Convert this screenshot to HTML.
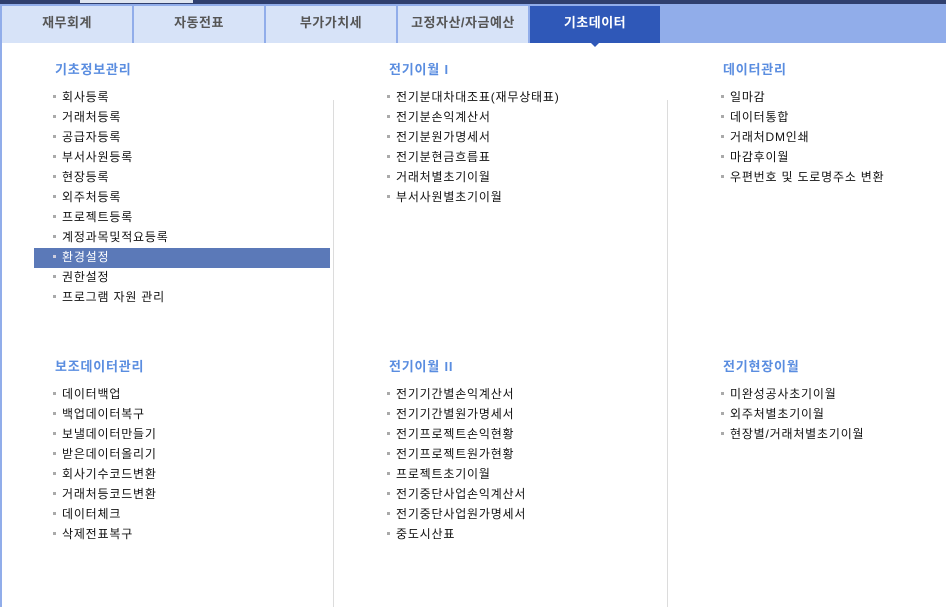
<!DOCTYPE html><html><head><meta charset="utf-8"><style>
*{margin:0;padding:0;box-sizing:border-box}
body{width:946px;height:607px;overflow:hidden;background:#fff;font-family:"Liberation Sans","Noto Sans CJK KR","NanumGothic",sans-serif;position:relative}
.top{position:absolute;left:0;top:0;width:946px;height:4px;background:#2f3f6e}
.top i{position:absolute;left:80px;width:113px;top:0;height:3px;background:#dfe5f0}
.band{position:absolute;left:0;top:4px;width:946px;height:39px;background:#91adea}
.tab{position:absolute;top:6px;height:37px;width:130px;background:#d7e3f8;color:#555;font-size:13px;font-weight:bold;text-align:center;line-height:33px;letter-spacing:0.5px}
.tab.a{background:#2f58b8;color:#fff}
.tri{position:absolute;left:590px;top:42px;width:0;height:0;border-left:5px solid transparent;border-right:5px solid transparent;border-top:5px solid #2f58b8}
.lb{position:absolute;left:0;top:43px;width:2px;height:564px;background:#91adea}
.vl{position:absolute;top:100px;width:1px;height:507px;background:#dcdcdc}
.h{position:absolute;color:#5a8de0;font-size:13px;font-weight:bold;letter-spacing:0.8px}
ul{position:absolute;list-style:none;font-size:12px;color:#111;letter-spacing:0.8px}
li{height:20px;line-height:20px;padding-left:9px;position:relative;white-space:nowrap}
li:before{content:"";position:absolute;left:0;top:8px;width:3px;height:3px;background:#aaa}
.hl{position:absolute;left:34px;top:248px;width:296px;height:20px;background:#5b79b8}
li.w{color:#fff}li.w:before{background:#ccd}
</style></head><body>
<div class="top"><i></i></div>
<div class="band"></div>
<div class="tab" style="left:2px">재무회계</div>
<div class="tab" style="left:134px">자동전표</div>
<div class="tab" style="left:266px">부가가치세</div>
<div class="tab" style="left:398px">고정자산/자금예산</div>
<div class="tab a" style="left:530px">기초데이터</div>
<div class="tri"></div>
<div class="lb"></div>
<div class="vl" style="left:333px"></div>
<div class="vl" style="left:667px"></div>
<div class="hl"></div>
<div class="h" style="left:55px;top:59px">기초정보관리</div>
<div class="h" style="left:389px;top:59px">전기이월 I</div>
<div class="h" style="left:723px;top:59px">데이터관리</div>
<div class="h" style="left:55px;top:356px">보조데이터관리</div>
<div class="h" style="left:389px;top:356px">전기이월 II</div>
<div class="h" style="left:723px;top:356px">전기현장이월</div>
<ul style="left:53px;top:87px"><li>회사등록</li><li>거래처등록</li><li>공급자등록</li><li>부서사원등록</li><li>현장등록</li><li>외주처등록</li><li>프로젝트등록</li><li>계정과목및적요등록</li><li class="w">환경설정</li><li>권한설정</li><li>프로그램 자원 관리</li></ul>
<ul style="left:387px;top:87px"><li>전기분대차대조표(재무상태표)</li><li>전기분손익계산서</li><li>전기분원가명세서</li><li>전기분현금흐름표</li><li>거래처별초기이월</li><li>부서사원별초기이월</li></ul>
<ul style="left:721px;top:87px"><li>일마감</li><li>데이터통합</li><li>거래처DM인쇄</li><li>마감후이월</li><li>우편번호 및 도로명주소 변환</li></ul>
<ul style="left:53px;top:384px"><li>데이터백업</li><li>백업데이터복구</li><li>보낼데이터만들기</li><li>받은데이터올리기</li><li>회사기수코드변환</li><li>거래처등코드변환</li><li>데이터체크</li><li>삭제전표복구</li></ul>
<ul style="left:387px;top:384px"><li>전기기간별손익계산서</li><li>전기기간별원가명세서</li><li>전기프로젝트손익현황</li><li>전기프로젝트원가현황</li><li>프로젝트초기이월</li><li>전기중단사업손익계산서</li><li>전기중단사업원가명세서</li><li>중도시산표</li></ul>
<ul style="left:721px;top:384px"><li>미완성공사초기이월</li><li>외주처별초기이월</li><li>현장별/거래처별초기이월</li></ul>
</body></html>
